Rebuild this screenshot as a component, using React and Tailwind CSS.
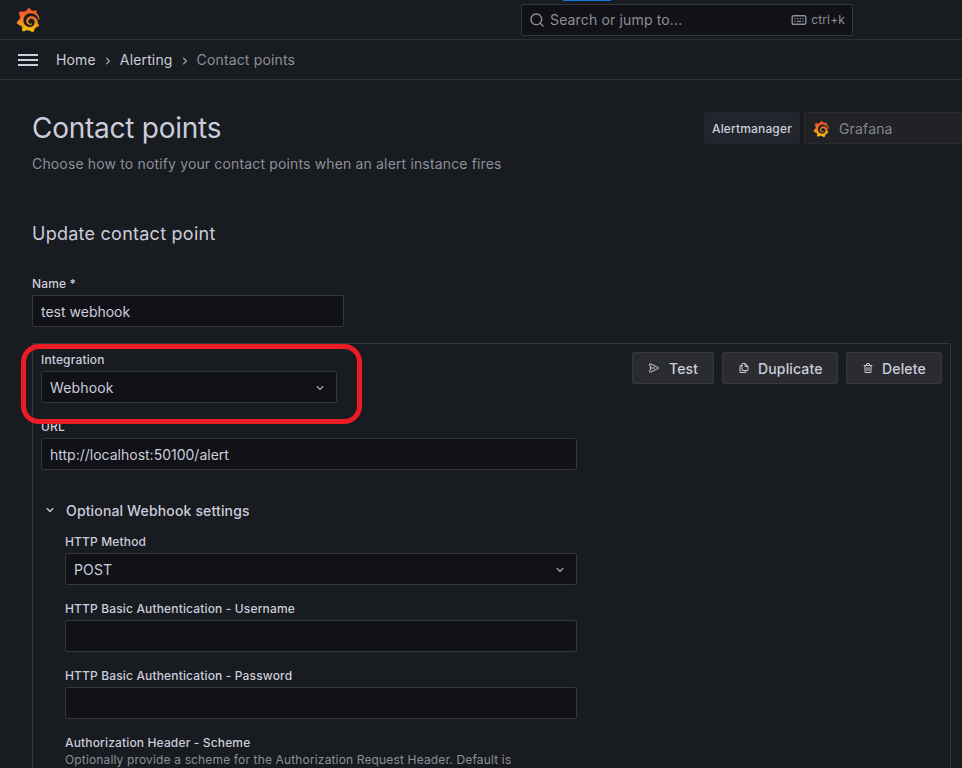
import React from "react";
import { SiGrafana } from "react-icons/si";

const ICONS = {
  down: "M17,9.17a1,1,0,0,0-1.41,0L12,12.71,8.46,9.17a1,1,0,0,0-1.41,0,1,1,0,0,0,0,1.42l4.24,4.24a1,1,0,0,0,1.42,0L17,10.59A1,1,0,0,0,17,9.17Z",
  right:
    "M14.83,11.29,10.59,7.05a1,1,0,0,0-1.42,0,1,1,0,0,0,0,1.41L12.71,12,9.17,15.54a1,1,0,0,0,0,1.41,1,1,0,0,0,.71.29,1,1,0,0,0,.71-.29l4.24-4.24A1,1,0,0,0,14.83,11.29Z",
  search:
    "M21.71,20.29,18,16.61A9,9,0,1,0,16.61,18l3.68,3.68a1,1,0,0,0,1.42,0A1,1,0,0,0,21.71,20.29ZM11,18a7,7,0,1,1,7-7A7,7,0,0,1,11,18Z",
  trash:
    "M10,18a1,1,0,0,0,1-1V11a1,1,0,0,0-2,0v6A1,1,0,0,0,10,18ZM20,6H16V5a3,3,0,0,0-3-3H11A3,3,0,0,0,8,5V6H4A1,1,0,0,0,4,8H5V19a3,3,0,0,0,3,3h8a3,3,0,0,0,3-3V8h1a1,1,0,0,0,0-2ZM10,5a1,1,0,0,1,1-1h2a1,1,0,0,1,1,1V6H10Zm7,14a1,1,0,0,1-1,1H8a1,1,0,0,1-1-1V8H17Zm-3-1a1,1,0,0,0,1-1V11a1,1,0,0,0-2,0v6A1,1,0,0,0,14,18Z",
  copy: "M21,8.94a1.31,1.31,0,0,0-.06-.27l0-.09a1.07,1.07,0,0,0-.19-.28h0l-6-6h0a1.07,1.07,0,0,0-.28-.19.32.32,0,0,0-.09,0A.88.88,0,0,0,14.05,2H10A3,3,0,0,0,7,5V6H6A3,3,0,0,0,3,9V19a3,3,0,0,0,3,3h8a3,3,0,0,0,3-3V18h1a3,3,0,0,0,3-3V9S21,9,21,8.94ZM15,5.41,17.59,8H16a1,1,0,0,1-1-1ZM15,19a1,1,0,0,1-1,1H6a1,1,0,0,1-1-1V9A1,1,0,0,1,6,8H7v7a3,3,0,0,0,3,3h5Zm4-4a1,1,0,0,1-1,1H10a1,1,0,0,1-1-1V5a1,1,0,0,1,1-1h3V7a3,3,0,0,0,3,3h3Z",
};

function Icon({ name, className }) {
  return (
    <svg viewBox="0 0 24 24" fill="currentColor" className={className}>
      <path d={ICONS[name]} />
    </svg>
  );
}

function SendIcon({ className }) {
  return (
    <svg viewBox="0 0 24 24" fill="none" stroke="currentColor" strokeWidth="2" strokeLinejoin="round" strokeLinecap="round" className={className}>
      <path d="M3.2 4.9 5.4 12 3.2 19.1a1.1 1.1 0 0 0 1.6 1.2L20.6 12.9a1 1 0 0 0 0-1.8L4.8 3.7a1.1 1.1 0 0 0-1.6 1.2ZM5.4 12H13" />
    </svg>
  );
}

function KeyboardIcon({ className }) {
  return (
    <svg viewBox="0 0 16 12" fill="none" stroke="currentColor" className={className}>
      <rect x="1.2" y="1.7" width="13.6" height="8.6" rx="1.4" strokeWidth="1.4" />
      <path d="M3.5 4.7h1.2M6 4.7h1.2M8.8 4.7H10M11.3 4.7h1.2M3.5 7.3h1.2M6 7.3h4M11.3 7.3h1.2" strokeWidth="1.2" />
    </svg>
  );
}

function Logo({ className }) {
  return <SiGrafana fill="url(#flame)" stroke="url(#flame)" strokeWidth="0.6" className={className} />;
}

function Label({ children }) {
  return <div className="h-[15px] text-[12px] leading-[15px] font-medium">{children}</div>;
}

function Field({ label, value, select, className = "" }) {
  return (
    <div className={className}>
      <Label>{label}</Label>
      <div className="mt-1 flex h-8 items-center justify-between rounded-[2px] border border-[#35363a] bg-[#111217] px-2">
        <span className={select ? "pt-0.5" : "pt-0.5 tracking-normal"}>{value}</span>
        {select && <Icon name="down" className="mt-0.5 size-4 text-[#9a9ba3]" />}
      </div>
    </div>
  );
}

function Button({ icon, children, className }) {
  return (
    <button className={`flex h-8 items-center gap-2 rounded-[2px] border border-[#38393e] bg-[#2b2c31] pl-[15px] font-medium ${className}`}>
      {icon}
      <span className="pt-0.5">{children}</span>
    </button>
  );
}

export default function App() {
  return (
    <div className="relative h-[768px] w-[962px] overflow-hidden bg-[#181b1f] font-['Inter',sans-serif] text-[14px] leading-[22px] tracking-[0.15px] text-[#ccccdc]">
      <svg className="absolute size-0">
        <defs>
          <linearGradient id="flame" x1="0" y1="0" x2="0" y2="1">
            <stop offset="0" stopColor="#f0532a" />
            <stop offset="0.35" stopColor="#f26a25" />
            <stop offset="1" stopColor="#fcc60e" />
          </linearGradient>
        </defs>
      </svg>
      <div className="absolute top-0 left-[563px] h-px w-12 bg-[#0b78d8]" />

      <header className="flex h-10 items-center border-b border-[#2d3034] pl-4">
        <Logo className="size-6" />
        <div className="ml-[481px] flex h-8 w-[332px] items-center rounded-[2px] border border-[#35363a] bg-[#111217] px-[7px] text-[#8e8f9a]">
          <Icon name="search" className="size-4" />
          <span className="ml-[5px]">Search or jump to...</span>
          <KeyboardIcon className="ml-auto h-3 w-4" />
          <span className="ml-1 text-[12px]">ctrl+k</span>
        </div>
      </header>

      <nav className="flex h-10 items-center border-b border-[#2d3034] pl-[18px]">
        <div className="flex w-5 flex-col gap-[3px]">
          <div className="h-0.5 bg-[#ccccdc]" />
          <div className="h-0.5 bg-[#ccccdc]" />
          <div className="h-0.5 bg-[#ccccdc]" />
        </div>
        <span className="ml-[18px]">Home</span>
        <Icon name="right" className="mx-1 mt-0.5 size-4 text-[#9a9ba3]" />
        <span>Alerting</span>
        <Icon name="right" className="mx-1 mt-0.5 size-4 text-[#9a9ba3]" />
        <span className="text-[#8e8f9a]">Contact points</span>
      </nav>

      <main className="pt-8 pl-8">
        <div className="flex h-8 items-center justify-between">
          <h1 className="text-[28px] leading-8 tracking-[-0.25px]">Contact points</h1>
          <div className="flex w-[258px] gap-1">
            <div className="flex h-8 w-24 shrink-0 items-center rounded-[2px] bg-[#22252b] pt-0.5 pl-2 text-[12px] font-medium">Alertmanager</div>
            <div className="flex h-8 flex-1 items-center rounded-l-[2px] border border-r-0 border-[#292b30] bg-[#202226] pt-0.5 pl-2 text-[#84858e]">
              <Logo className="size-4" />
              <span className="ml-[10px]">Grafana</span>
            </div>
          </div>
        </div>
        <p className="mt-[9px] text-[#8e8f9a]">Choose how to notify your contact points when an alert instance fires</p>
        <h2 className="mt-12 text-[18px] leading-[22px] tracking-[0.25px]">Update contact point</h2>
        <Field label="Name *" value="test webhook" className="mt-[31px] w-[312px]" />

        <section className="mt-4 h-[500px] w-[919px] rounded-[2px] border border-[#35363a] px-2 pt-2">
          <div className="flex justify-between">
            <Field label="Integration" value="Webhook" select className="w-[296px]" />
            <div className="flex gap-2">
              <Button className="w-[82px]" icon={<SendIcon className="mr-[1px] size-3" />}>Test</Button>
              <Button className="w-[116px]" icon={<Icon name="copy" className="size-3" />}>Duplicate</Button>
              <Button className="w-24" icon={<Icon name="trash" className="size-3" />}>Delete</Button>
            </div>
          </div>
          <Field label="URL" value="http://localhost:50100/alert" className="mt-4 w-[536px]" />
          <div className="mt-[30px] flex items-center">
            <Icon name="down" className="mb-0.5 size-4 ml-px mr-px" />
            <span className="ml-[7px] font-medium">Optional Webhook settings</span>
          </div>
          <div className="mt-3 ml-6 flex w-[512px] flex-col gap-4">
            <Field label="HTTP Method" value="POST" select />
            <Field label="HTTP Basic Authentication - Username" />
            <Field label="HTTP Basic Authentication - Password" />
            <div>
              <Label>Authorization Header - Scheme</Label>
              <p className="mt-0.5 text-[12px] leading-4 text-[#8e8f9a]">Optionally provide a scheme for the Authorization Request Header. Default is</p>
            </div>
          </div>
        </section>
      </main>

      <div className="absolute top-[344px] left-[21px] h-20 w-[341px] rounded-[18px] border-[5px] border-[#ed1c24]" />
    </div>
  );
}
